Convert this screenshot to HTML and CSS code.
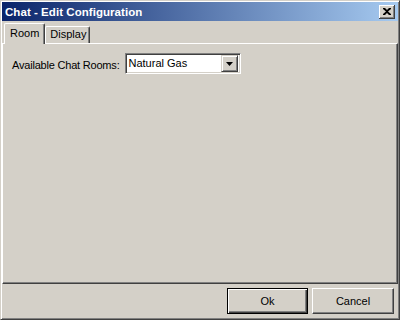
FILE: index.html
```html
<!DOCTYPE html>
<html>
<head>
<meta charset="utf-8">
<link rel="stylesheet" href="styles.css">
</head>
<body>
<div class="window">
  <div class="titlebar">
    <span class="title">Chat - Edit Configuration</span>
    <button class="close" aria-label="Close">
      <svg width="8" height="7" viewBox="0 0 8 7"><path d="M0 0h2l2 2 2-2h2v1L5 3.5 8 6v1H6L4 5 2 7H0V6l3-2.5L0 1z" fill="#000"/></svg>
    </button>
  </div>
  <div class="tabs">
    <div class="tab active">Room</div>
    <div class="tab">Display</div>
  </div>
  <div class="panel">
    <div class="row">
      <span class="label">Available Chat Rooms:</span>
      <div class="combo">
        <span class="combo-text">Natural Gas</span>
        <div class="combo-btn">
          <svg width="7" height="4" viewBox="0 0 7 4"><path d="M0 0h7L3.5 4z" fill="#000"/></svg>
        </div>
      </div>
    </div>
  </div>
  <div class="buttons">
    <button class="btn default">Ok</button>
    <button class="btn">Cancel</button>
  </div>
</div>
</body>
</html>
```
FILE: styles.css
```css
* { box-sizing: border-box; }
html, body { margin: 0; padding: 0; background: #d4d0c8; }
body { font-family: "Liberation Sans", Arial, sans-serif; font-size: 11px; color: #000; }

.window {
  width: 400px;
  height: 320px;
  background: #d4d0c8;
  border-top: 1px solid #d4d0c8;
  border-left: 1px solid #d4d0c8;
  border-right: 1px solid #404040;
  border-bottom: 1px solid #404040;
  box-shadow: inset 1px 1px #fff, inset -1px -1px #808080;
  padding: 1px;
  display: flex;
  flex-direction: column;
}

.titlebar {
  height: 19px;
  flex: none;
  background: linear-gradient(to right, #0a246a, #a6caf0);
  display: flex;
  align-items: flex-start;
  padding: 3px 3px 0 3px;
}
.title {
  flex: 1;
  color: #fff;
  font-weight: bold;
  font-size: 11.5px;
  line-height: 14px;
  letter-spacing: 0.05px;
}
.close {
  width: 16px;
  height: 14px;
  padding: 0;
  margin: 0;
  background: #d4d0c8;
  border: none;
  border-right: 1px solid #404040;
  border-bottom: 1px solid #404040;
  box-shadow: inset 1px 1px #fff, inset -1px -1px #808080;
  display: flex;
  align-items: center;
  justify-content: center;
  padding-left: 1px;
}

.tabs {
  height: 22px;
  flex: none;
  display: flex;
  align-items: flex-end;
  padding-left: 2px;
  position: relative;
  z-index: 1;
}
.tab {
  height: 17px;
  padding: 0 3px 0 4px;
  line-height: 15px;
  background: #d4d0c8;
  border-top: 1px solid #fff;
  border-left: 1px solid #fff;
  border-right: 1px solid #404040;
  box-shadow: inset -1px 0 #808080;
  border-top-left-radius: 2px;
  border-top-right-radius: 2px;
}
.tab.active {
  height: 21px;
  margin-bottom: -1px;
  padding: 0 5px;
  line-height: 19px;
}

.panel {
  flex: 1;
  border-top: 1px solid #fff;
  border-left: 1px solid #fff;
  border-right: 1px solid #404040;
  border-bottom: 1px solid #404040;
  box-shadow: inset -1px -1px #808080;
  padding: 9px 9px;
}
.row {
  display: flex;
  align-items: center;
  gap: 5px;
}
.label {
  letter-spacing: -0.2px;
  padding-top: 2px;
}
.combo {
  width: 116px;
  height: 21px;
  background: #fff;
  border-top: 1px solid #808080;
  border-left: 1px solid #808080;
  border-right: 1px solid #fff;
  border-bottom: 1px solid #fff;
  box-shadow: inset 1px 1px #404040, inset -1px -1px #d4d0c8;
  padding: 2px 2px 2px 3px;
  display: flex;
  align-items: center;
}
.combo-text { flex: 1; line-height: 17px; }
.combo-btn {
  width: 17px;
  height: 17px;
  background: #d4d0c8;
  border-right: 1px solid #404040;
  border-bottom: 1px solid #404040;
  border-top: 1px solid #d4d0c8;
  border-left: 1px solid #d4d0c8;
  box-shadow: inset 1px 1px #fff, inset -1px -1px #808080;
  display: flex;
  align-items: center;
  justify-content: center;
}

.buttons {
  height: 34px;
  flex: none;
  display: flex;
  justify-content: flex-end;
  align-items: center;
  gap: 4px;
  padding-right: 4px;
}
.btn {
  font-family: "Liberation Sans", Arial, sans-serif;
  font-size: 11px;
  color: #000;
  height: 26px;
  width: 82px;
  padding: 0;
  margin: 0;
  background: #d4d0c8;
  border-top: 1px solid #fff;
  border-left: 1px solid #fff;
  border-right: 1px solid #404040;
  border-bottom: 1px solid #404040;
  box-shadow: inset -1px -1px #808080;
}
.btn.default {
  width: 81px;
  border: 1px solid #000;
  box-shadow: inset 1px 1px #fff, inset -1px -1px #404040, inset -2px -2px #808080;
}
```
